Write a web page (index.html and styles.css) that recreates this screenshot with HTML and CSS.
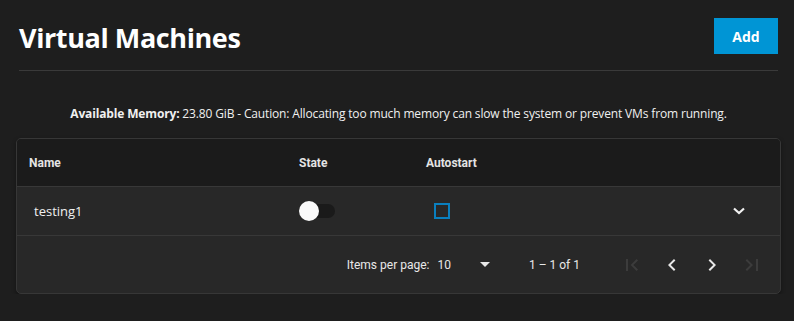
FILE: index.html
```html
<!DOCTYPE html>
<html lang="en">
<head>
    <meta charset="UTF-8">
    <meta name="viewport" content="width=device-width, initial-scale=1.0">
    <title>Virtual Machines</title>
    <link rel="stylesheet" href="styles.css">
</head>
<body>
    <div class="page">
        <header class="page-header">
            <h1>Virtual Machines</h1>
            <button class="btn-add">Add</button>
        </header>

        <p class="memory-note"><strong>Available Memory:</strong> 23.80 GiB - Caution: Allocating too much memory can slow the system or prevent VMs from running.</p>

        <div class="card">
            <div class="row row-head">
                <div class="cell">Name</div>
                <div class="cell">State</div>
                <div class="cell">Autostart</div>
                <div class="cell"></div>
            </div>
            <div class="row row-body">
                <div class="cell cell-name">testing1</div>
                <div class="cell"><span class="toggle"><span class="thumb"></span></span></div>
                <div class="cell"><span class="checkbox"></span></div>
                <div class="cell cell-expand">
                    <svg width="14" height="10" viewBox="0 0 14 10"><path d="M2 2.5 L7 7 L12 2.5" fill="none" stroke="#f0f0f0" stroke-width="2.2"/></svg>
                </div>
            </div>
            <div class="paginator">
                <span class="per-page">Items per page:</span>
                <span class="page-size">10 <svg width="10" height="5" viewBox="0 0 10 5"><path d="M0 0 L10 0 L5 5 Z" fill="#e8e8e8"/></svg></span>
                <span class="range">1 – 1 of 1</span>
                <div class="nav">
                    <svg class="dim" width="24" height="24" viewBox="0 0 24 24"><path d="M6 6h2v12H6zM18 7.4 16.6 6l-6 6 6 6 1.4-1.4-4.6-4.6z" fill="currentColor"/></svg>
                    <svg width="24" height="24" viewBox="0 0 24 24"><path d="M15.4 7.4 14 6l-6 6 6 6 1.4-1.4-4.6-4.6z" fill="currentColor"/></svg>
                    <svg width="24" height="24" viewBox="0 0 24 24"><path d="M10 6 8.6 7.4l4.6 4.6-4.6 4.6L10 18l6-6z" fill="currentColor"/></svg>
                    <svg class="dim" width="24" height="24" viewBox="0 0 24 24"><path d="M5.6 7.4 10.2 12l-4.6 4.6L7 18l6-6-6-6zM16 6h2v12h-2z" fill="currentColor"/></svg>
                </div>
            </div>
        </div>
    </div>
</body>
</html>
```

FILE: styles.css
```css
* {
    margin: 0;
    padding: 0;
    box-sizing: border-box;
}

body {
    background: #1e1e1e;
    color: #e8e8e8;
    font-family: Roboto, "Liberation Sans", sans-serif;
}

.page {
    padding: 18px 13px 0 16px;
}

.page-header {
    display: flex;
    justify-content: space-between;
    align-items: center;
    height: 53px;
    margin: 0 3px;
    padding-bottom: 16px;
    border-bottom: 1px solid #3a3a3a;
}

.page-header h1 {
    font-family: "Open Sans", sans-serif;
    font-size: 27px;
    line-height: 36px;
    font-weight: 700;
    letter-spacing: -0.4px;
    color: #ffffff;
    margin-top: 3px;
}

.btn-add {
    background: #0095d5;
    color: #ffffff;
    border: none;
    width: 64px;
    height: 36px;
    font-family: "Open Sans", sans-serif;
    font-weight: 700;
    font-size: 14px;
}

.memory-note {
    text-align: center;
    font-family: "Open Sans", sans-serif;
    font-size: 12px;
    letter-spacing: -0.15px;
    color: #f0f0f0;
    margin: 34px 0 16px;
}

.memory-note strong {
    font-weight: 700;
}

.card {
    border: 1px solid #373737;
    border-radius: 5px;
    overflow: hidden;
    background: #282828;
    box-shadow: 0 2px 4px rgba(0, 0, 0, 0.4);
}

.row {
    display: grid;
    grid-template-columns: 270px 127px 1fr 80px;
    align-items: center;
    padding-left: 12px;
    border-bottom: 1px solid #383838;
}

.row-head {
    height: 48px;
    background: #1b1b1b;
    font-size: 12px;
    font-weight: 700;
    color: #e4e4e4;
}

.row-body {
    height: 49px;
    font-family: "Open Sans", sans-serif;
    font-size: 13px;
    color: #f0f0f0;
}

.cell-name {
    padding-left: 5px;
}

.toggle {
    display: block;
    position: relative;
    width: 36px;
    height: 14px;
    border-radius: 7px;
    background: #1a1a1a;
}

.toggle .thumb {
    position: absolute;
    left: 0;
    top: -3px;
    width: 20px;
    height: 20px;
    border-radius: 50%;
    background: #fafafa;
}

.checkbox {
    display: block;
    width: 16px;
    height: 16px;
    margin-left: 8px;
    border: 2px solid #0a7fbe;
}

.cell-expand {
    padding-left: 32px;
    display: flex;
}

.paginator {
    display: flex;
    align-items: center;
    justify-content: flex-end;
    height: 57px;
    padding-right: 16px;
    font-size: 12px;
    color: #e8e8e8;
}

.page-size {
    display: flex;
    align-items: center;
    gap: 29px;
    margin-left: 8px;
    margin-right: 39px;
}

.range {
    margin-right: 40px;
}

.nav {
    display: flex;
    gap: 16px;
    color: #e8e8e8;
}

.nav .dim {
    color: #3c3c3c;
}
```
